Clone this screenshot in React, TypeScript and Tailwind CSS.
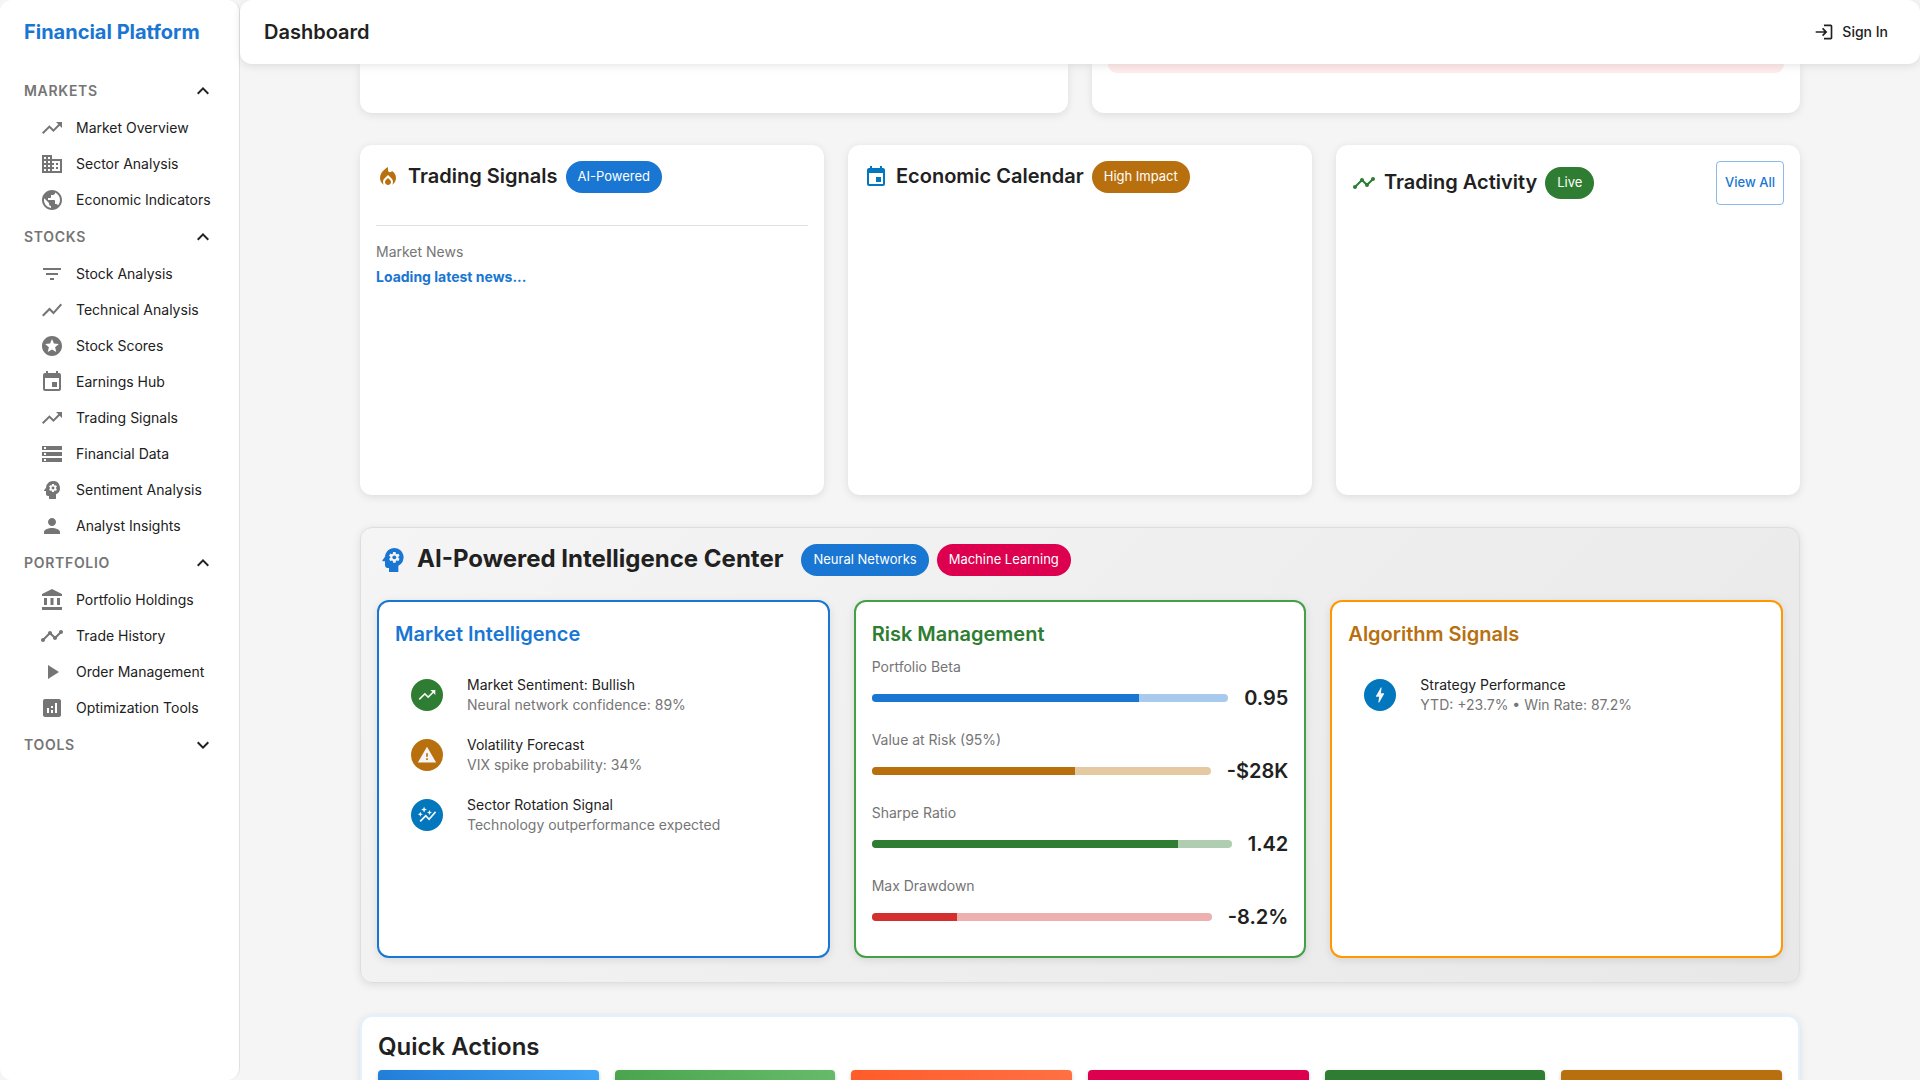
import type { ReactNode } from "react";
import type { IconType } from "react-icons";
import {
  MdAccountBalance,
  MdAnalytics,
  MdAutoGraph,
  MdBolt,
  MdBusiness,
  MdEvent,
  MdExpandLess,
  MdExpandMore,
  MdFilterList,
  MdLocalFireDepartment,
  MdLogin,
  MdPerson,
  MdPlayArrow,
  MdPsychology,
  MdPublic,
  MdShowChart,
  MdStars,
  MdStorage,
  MdTimeline,
  MdTrendingUp,
  MdWarning,
} from "react-icons/md";

type NavItem = { label: string; icon: IconType };

const sections: { title: string; items: NavItem[] }[] = [
  {
    title: "Markets",
    items: [
      { label: "Market Overview", icon: MdTrendingUp },
      { label: "Sector Analysis", icon: MdBusiness },
      { label: "Economic Indicators", icon: MdPublic },
    ],
  },
  {
    title: "Stocks",
    items: [
      { label: "Stock Analysis", icon: MdFilterList },
      { label: "Technical Analysis", icon: MdShowChart },
      { label: "Stock Scores", icon: MdStars },
      { label: "Earnings Hub", icon: MdEvent },
      { label: "Trading Signals", icon: MdTrendingUp },
      { label: "Financial Data", icon: MdStorage },
      { label: "Sentiment Analysis", icon: MdPsychology },
      { label: "Analyst Insights", icon: MdPerson },
    ],
  },
  {
    title: "Portfolio",
    items: [
      { label: "Portfolio Holdings", icon: MdAccountBalance },
      { label: "Trade History", icon: MdTimeline },
      { label: "Order Management", icon: MdPlayArrow },
      { label: "Optimization Tools", icon: MdAnalytics },
    ],
  },
  { title: "Tools", items: [] },
];

const insights = [
  { title: "Market Sentiment: Bullish", detail: "Neural network confidence: 89%", icon: MdTrendingUp, color: "bg-[#2e7d32]" },
  { title: "Volatility Forecast", detail: "VIX spike probability: 34%", icon: MdWarning, color: "bg-[#b8700e]" },
  { title: "Sector Rotation Signal", detail: "Technology outperformance expected", icon: MdAutoGraph, color: "bg-[#0277bd]" },
];

const risks = [
  { label: "Portfolio Beta", value: "0.95", percent: 75, fill: "bg-[#1976d2]", track: "bg-[#a7caed]" },
  { label: "Value at Risk (95%)", value: "-$28K", percent: 60, fill: "bg-[#b8700e]", track: "bg-[#e4c9a3]" },
  { label: "Sharpe Ratio", value: "1.42", percent: 85, fill: "bg-[#2e7d32]", track: "bg-[#afcdb1]" },
  { label: "Max Drawdown", value: "-8.2%", percent: 25, fill: "bg-[#d32f2f]", track: "bg-[#eeafaf]" },
];

const actions = [
  { label: "Portfolio", color: "bg-linear-45 from-[#1976d2] to-[#42a5f5]" },
  { label: "Screener", color: "bg-linear-45 from-[#43a047] to-[#66bb6a]" },
  { label: "Backtest", color: "bg-linear-45 from-[#ff5722] to-[#ff7043]" },
  { label: "Signals", color: "bg-[#dc004e]" },
  { label: "Trades", color: "bg-[#2e7d32]" },
  { label: "Calendar", color: "bg-[#b8700e]" },
];

function Chip({ color, children }: { color: string; children: ReactNode }) {
  return (
    <span className={`flex h-8 items-center rounded-full px-3 text-[13px] whitespace-nowrap text-white ${color}`}>
      {children}
    </span>
  );
}

function Card({ children }: { children: ReactNode }) {
  return <section className="min-h-[350px] rounded-xl bg-white p-4 shadow-[0_2px_8px_rgba(0,0,0,0.1)]">{children}</section>;
}

function CardTitle({ icon: Icon, color, title, chip }: { icon: IconType; color: string; title: string; chip: ReactNode }) {
  return (
    <div className="flex items-center gap-2">
      <Icon className={`size-6 ${color}`} />
      <h2 className="pb-0.5 text-xl leading-[30px] font-semibold">{title}</h2>
      {chip}
    </div>
  );
}

function Insight({ title, detail, icon: Icon, color }: { title: string; detail: string; icon: IconType; color: string }) {
  return (
    <li className="flex items-center gap-6 px-4 py-2.5">
      <span className={`flex size-8 items-center justify-center rounded-full text-[#f5f5f5] ${color}`}>
        <Icon className="size-5" />
      </span>
      <div className="text-sm">
        <p>{title}</p>
        <p className="text-[#757575]">{detail}</p>
      </div>
    </li>
  );
}

function Panel({ title, border, color, children }: { title: string; border: string; color: string; children: ReactNode }) {
  return (
    <section className={`rounded-xl border-2 bg-white px-4 pt-4 pb-[23px] shadow-[0_2px_8px_rgba(0,0,0,0.1)] ${border}`}>
      <h3 className={`mb-[7px] text-xl leading-8 font-semibold ${color}`}>{title}</h3>
      {children}
    </section>
  );
}

function Sidebar() {
  return (
    <aside className="flex w-60 shrink-0 flex-col rounded-xl border-r border-[#e0e0e0] bg-white">
      <div className="flex h-16 items-center px-6 text-xl font-bold text-[#1976d2]">Financial Platform</div>
      <nav className="py-2">
        {sections.map(({ title, items }) => {
          const Chevron = items.length ? MdExpandLess : MdExpandMore;
          return (
            <div key={title}>
              <button
                type="button"
                aria-expanded={items.length > 0}
                className="flex h-[38px] w-full items-center justify-between px-6 text-sm font-semibold tracking-wider text-[#757575] uppercase"
              >
                {title}
                <Chevron className="size-6 text-[#212121]" />
              </button>
              <ul>
                {items.map(({ label, icon: Icon }) => (
                  <li key={label}>
                    <a href="#" className="flex h-9 items-center gap-3 pl-10 text-sm whitespace-nowrap">
                      <Icon className="size-6 text-[#757575]" />
                      {label}
                    </a>
                  </li>
                ))}
              </ul>
            </div>
          );
        })}
      </nav>
    </aside>
  );
}

export default function App() {
  return (
    <div className="flex h-screen overflow-hidden bg-[#f5f5f5] font-['Inter',sans-serif] text-[#212121]">
      <Sidebar />
      <div className="flex min-w-0 flex-1 flex-col">
        <header className="z-10 flex h-16 shrink-0 items-center justify-between rounded-xl bg-white px-6 shadow-[0_2px_8px_rgba(0,0,0,0.1)]">
          <h1 className="text-xl font-semibold">Dashboard</h1>
          <button type="button" className="flex items-center gap-2 px-2 py-1.5 text-sm font-medium">
            <MdLogin className="size-5" />
            Sign In
          </button>
        </header>

        <main className="min-h-0 flex-1 overflow-hidden">
          <div className="mx-auto flex max-w-[1536px] flex-col gap-8 px-12">
            <div className="grid grid-cols-2 gap-6">
              <section className="rounded-b-xl bg-white shadow-[0_2px_8px_rgba(0,0,0,0.1)]" />
              <section className="rounded-b-xl bg-white px-4 pb-10 shadow-[0_2px_8px_rgba(0,0,0,0.1)]">
                <div className="h-[9px] rounded-b-xl bg-[#ffebeb]" />
              </section>
            </div>

            <div className="grid grid-cols-3 gap-6">
              <Card>
                <CardTitle
                  icon={MdLocalFireDepartment}
                  color="text-[#b8700e]"
                  title="Trading Signals"
                  chip={<Chip color="bg-[#1976d2]">AI-Powered</Chip>}
                />
                <hr className="mt-8 mb-4 border-[#e0e0e0]" />
                <h3 className="text-sm text-[#757575]">Market News</h3>
                <p className="mt-[5px] text-sm font-bold text-[#1976d2]">Loading latest news...</p>
              </Card>
              <Card>
                <CardTitle
                  icon={MdEvent}
                  color="text-[#0277bd]"
                  title="Economic Calendar"
                  chip={<Chip color="bg-[#b8700e]">High Impact</Chip>}
                />
              </Card>
              <Card>
                <div className="flex items-center justify-between">
                  <CardTitle
                    icon={MdTimeline}
                    color="text-[#2e7d32]"
                    title="Trading Activity"
                    chip={<Chip color="bg-[#2e7d32]">Live</Chip>}
                  />
                  <button type="button" className="h-11 rounded border border-[#1976d2]/50 px-2 text-[13px] font-medium text-[#1976d2]">
                    View All
                  </button>
                </div>
              </Card>
            </div>

            <section className="rounded-xl border border-[#dedede] bg-linear-135 from-[#f5f5f5] to-[#e8e8e8] px-4 pt-4 pb-6 shadow-[0_2px_8px_rgba(0,0,0,0.1)]">
              <div className="mb-6 flex items-center gap-2">
                <MdPsychology className="size-8 text-[#1976d2]" />
                <h2 className="mr-2.5 pb-0.5 text-2xl leading-[30px] font-bold">AI-Powered Intelligence Center</h2>
                <Chip color="bg-[#1976d2]">Neural Networks</Chip>
                <Chip color="bg-[#dc004e]">Machine Learning</Chip>
              </div>
              <div className="grid grid-cols-3 gap-6">
                <Panel title="Market Intelligence" border="border-[#1976d2]" color="text-[#1976d2]">
                  <ul className="py-2">
                    {insights.map((insight) => (
                      <Insight key={insight.title} {...insight} />
                    ))}
                  </ul>
                </Panel>
                <Panel title="Risk Management" border="border-[#43a047]" color="text-[#2e7d32]">
                  <div className="flex flex-col gap-4">
                    {risks.map(({ label, value, percent, fill, track }) => (
                      <div key={label}>
                        <p className="mb-[5px] text-sm leading-5 text-[#757575]">{label}</p>
                        <div className="flex items-center gap-4">
                          <div className={`h-2 flex-1 overflow-hidden rounded ${track}`}>
                            <div className={`h-full ${fill}`} style={{ width: `${percent}%` }} />
                          </div>
                          <span className="text-xl leading-8 font-semibold">{value}</span>
                        </div>
                      </div>
                    ))}
                  </div>
                </Panel>
                <Panel title="Algorithm Signals" border="border-[#ff9800]" color="text-[#b8700e]">
                  <ul className="py-2">
                    <Insight
                      title="Strategy Performance"
                      detail="YTD: +23.7% • Win Rate: 87.2%"
                      icon={MdBolt}
                      color="bg-[#0277bd]"
                    />
                  </ul>
                </Panel>
              </div>
            </section>

            <section className="rounded-xl border-2 border-[#e3f2fd] bg-white p-4 shadow-[0_2px_8px_rgba(0,0,0,0.1)]">
              <h2 className="mb-2.5 text-2xl leading-[27px] font-semibold">Quick Actions</h2>
              <div className="grid grid-cols-6 gap-4">
                {actions.map(({ label, color }) => (
                  <button
                    key={label}
                    type="button"
                    aria-label={label}
                    className={`h-14 rounded shadow-[0_2px_4px_rgba(0,0,0,0.2)] ${color}`}
                  />
                ))}
              </div>
            </section>
          </div>
        </main>
      </div>
    </div>
  );
}
